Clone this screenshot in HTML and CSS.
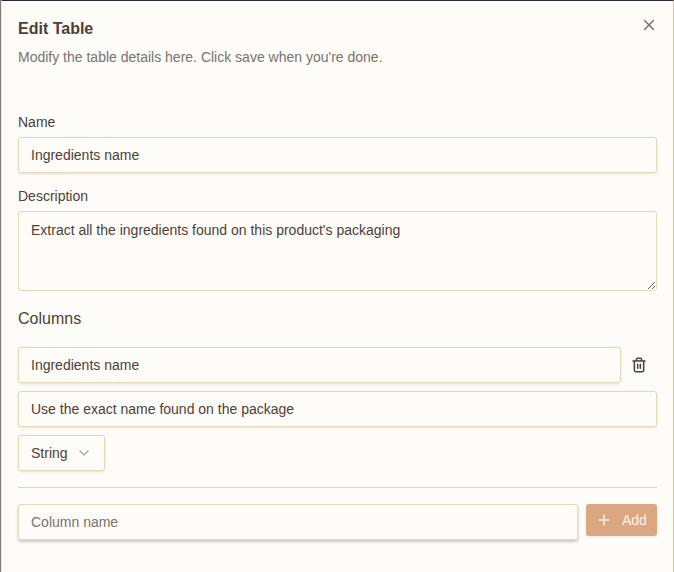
FILE: index.html
```html
<!DOCTYPE html>
<html lang="en">
<head>
<meta charset="utf-8">
<title>Edit Table</title>
<link rel="stylesheet" href="styles.css">
</head>
<body>
<main class="dialog">
  <header class="header">
    <div>
      <h1 class="title">Edit Table</h1>
      <p class="subtitle">Modify the table details here. Click save when you're done.</p>
    </div>
    <button class="close" aria-label="Close"><svg width="16" height="16" viewBox="0 0 24 24" fill="none" stroke="currentColor" stroke-width="2" stroke-linecap="round"><path d="M18 6 6 18M6 6l12 12" transform="translate(-1.2 -1.2) scale(1.1)"/></svg></button>
  </header>
  <label class="label" for="name">Name</label>
  <input class="input" id="name" value="Ingredients name">
  <label class="label label-description" for="description">Description</label>
  <textarea class="input textarea" id="description">Extract all the ingredients found on this product's packaging</textarea>
  <h2 class="columns-title">Columns</h2>
  <section class="column">
    <div class="row">
      <input class="input" value="Ingredients name">
      <button class="delete" aria-label="Delete column"><svg width="16" height="16" viewBox="0 0 24 24" fill="none" stroke="currentColor" stroke-width="2.3" stroke-linecap="round" stroke-linejoin="round"><path d="M3 6h18M19 6v14a2 2 0 0 1-2 2H7a2 2 0 0 1-2-2V6M8 6V4a2 2 0 0 1 2-2h4a2 2 0 0 1 2 2v2M10 11v6M14 11v6"/></svg></button>
    </div>
    <input class="input" value="Use the exact name found on the package">
    <button class="select">String<svg width="16" height="16" viewBox="0 0 24 24" fill="none" stroke="currentColor" stroke-width="2" stroke-linecap="round" stroke-linejoin="round"><path d="m6 9 6 6 6-6"/></svg></button>
  </section>
  <div class="row add-row">
    <input class="input new-column" placeholder="Column name">
    <button class="add"><svg width="16" height="16" viewBox="0 0 24 24" fill="none" stroke="currentColor" stroke-width="2" stroke-linecap="round"><path d="M4.5 12h15M12 4.5v15"/></svg>Add</button>
  </div>
</main>
</body>
</html>
```
FILE: styles.css
```css
* { box-sizing: border-box; }
body {
  margin: 0;
  overflow: hidden;
  background: #857b7b;
  color: #4e3f37;
  font: 14px/20px "Liberation Sans", Arial, sans-serif;
}
button, input, textarea { font: inherit; color: inherit; }
button { border: 0; padding: 0; background: none; }
svg { display: block; flex-shrink: 0; }
.dialog {
  display: flex;
  flex-direction: column;
  height: 572px;
  margin-left: 1px;
  padding: 16px 16px 0;
  border-top: 1px solid #312b31;
  border-left: 1px solid #eee5d0;
  border-right: 1px solid #cfc6b4;
  background: #fdfcf8;
}
.header { display: flex; justify-content: space-between; height: 98px; }
.title { margin: 0; font-size: 16px; line-height: 24px; font-weight: 700; }
.subtitle { margin: 6px 0 0; color: #7b736d; }
.close { width: 16px; height: 16px; color: #7b6d63; }
.label { line-height: 14px; margin-bottom: 8px; }
.label-description { margin-top: 16px; }
.input {
  display: block;
  width: 100%;
  height: 36px;
  padding: 4px 12px;
  border: 1px solid #e6d8b5;
  border-radius: 3px;
  background: transparent;
  box-shadow: 0 1px 3px rgba(60, 45, 30, .13);
  outline: none;
}
.input::placeholder { color: #7b736d; opacity: 1; }
.textarea { height: 80px; padding: 8px 12px; resize: vertical; box-shadow: none; }
.columns-title { margin: 16px 0; font-size: 16px; line-height: 24px; font-weight: 400; }
.column {
  display: flex;
  flex-direction: column;
  gap: 8px;
  padding-bottom: 16px;
  border-bottom: 1px solid #ded7bf;
}
.row { display: flex; }
.delete { display: grid; place-items: center; flex: 0 0 36px; height: 36px; }
.select {
  display: flex;
  align-items: center;
  justify-content: space-between;
  width: 87px;
  height: 36px;
  padding: 0 12px;
  border: 1px solid #e6d8b5;
  border-radius: 3px;
  box-shadow: 0 1px 3px rgba(60, 45, 30, .13);
}
.select svg { color: #aaa39d; }
.add-row { gap: 8px; padding-top: 16px; }
.new-column { box-shadow: 0 2px 3px rgba(60, 45, 30, .25); }
.add {
  display: flex;
  align-items: center;
  gap: 10px;
  flex: 0 0 71px;
  height: 32px;
  padding-left: 10px;
  border-radius: 3px;
  background: #daa780;
  color: #fdf5ee;
  box-shadow: 0 1px 3px rgba(60, 45, 30, .1);
}
```
